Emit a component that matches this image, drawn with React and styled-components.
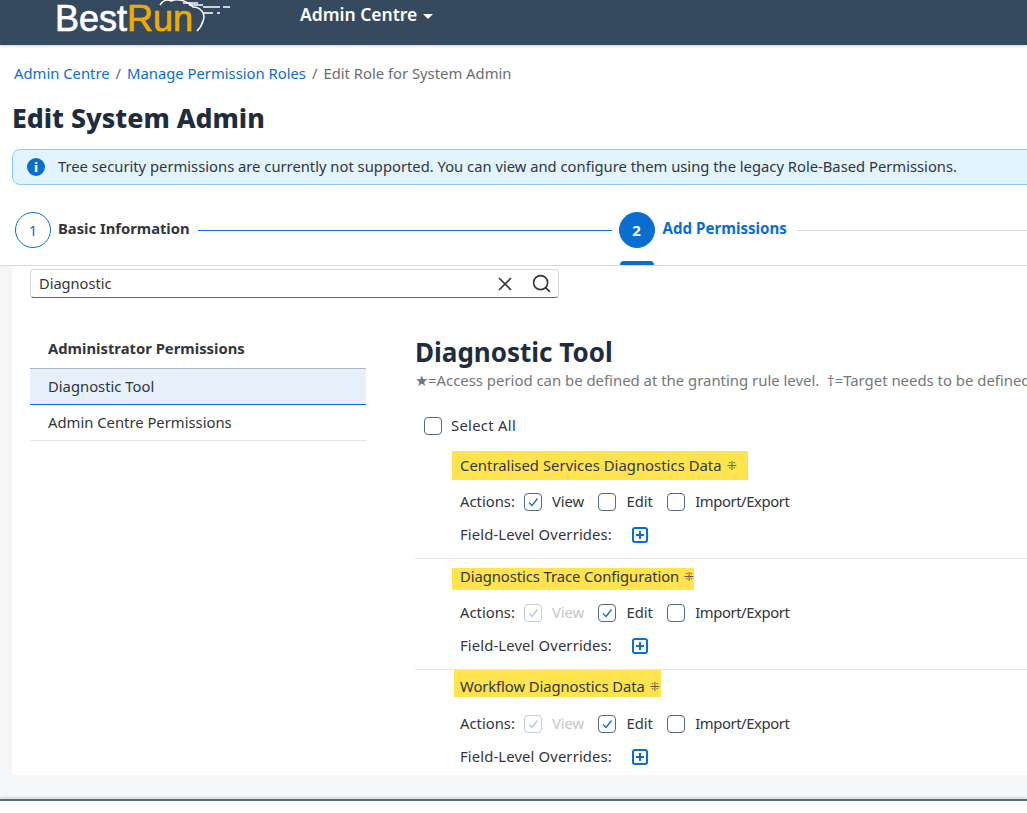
import React from "react";
import styled, { createGlobalStyle } from "styled-components";
import { X, Search } from "lucide-react";

const GlobalStyle = createGlobalStyle`
  html, body {
    margin: 0;
    padding: 0;
    background: #fff;
    overflow: hidden;
  }
  body {
    font-family: "Noto Sans", "Open Sans", sans-serif;
    color: #32363a;
  }
`;

const Page = styled.div`
  width: 1027px;
  height: 813px;
  overflow: hidden;
  display: flex;
  flex-direction: column;
`;

const TopBar = styled.header`
  height: 45px;
  flex: none;
  background: #354a5f;
  display: flex;
  align-items: flex-start;
  padding-left: 55px;
  box-shadow: 0 1px 3px rgba(0, 0, 0, 0.2);
  overflow: hidden;
`;

const Logo = styled.div`
  position: relative;
  width: 180px;
  height: 32px;
  font-family: "Liberation Sans", Arial, sans-serif;
  font-size: 36px;
  line-height: 37px;
  color: #fff;
  -webkit-text-stroke: 0.7px currentColor;

  span {
    color: #f0ab00;
  }

  svg {
    position: absolute;
    left: 104px;
    top: 0;
    -webkit-text-stroke: 0;
  }
`;

const MenuButton = styled.div`
  margin-left: 65px;
  font-size: 17.5px;
  font-weight: 600;
  color: #fff;
  line-height: 28px;
  display: flex;
  align-items: center;
  gap: 6px;

  i {
    width: 0;
    height: 0;
    border-left: 5px solid transparent;
    border-right: 5px solid transparent;
    border-top: 5px solid #fff;
    margin-top: 4px;
  }
`;

const Crumbs = styled.nav`
  margin: 18px 0 0 14px;
  font-size: 14.8px;
  line-height: 20px;
  color: #6a6d70;
  display: flex;
  gap: 6px;

  a {
    color: #0a6ed1;
  }
`;

const Title = styled.h1`
  margin: 18px 0 0 12px;
  font-size: 26.7px;
  line-height: 34px;
  font-weight: 800;
  color: #1d2d3e;
`;

const Strip = styled.div`
  margin: 14px -300px 0 12px;
  height: 36px;
  box-sizing: border-box;
  flex: none;
  background: #e1f4ff;
  border: 1px solid #8ccbff;
  border-radius: 8px;
  display: flex;
  align-items: center;
  padding-left: 14px;
  gap: 13px;
  font-size: 14.77px;
  color: #32363a;
  white-space: nowrap;
`;

const StripText = styled.span`
  padding-bottom: 2px;
`;

const InfoDot = styled.span`
  width: 18px;
  height: 18px;
  border-radius: 50%;
  background: #0a6ed1;
  color: #fff;
  display: flex;
  align-items: center;
  justify-content: center;
  font-weight: 800;
  font-size: 13px;
`;

const Stepper = styled.div`
  margin-top: 27px;
  height: 54px;
  flex: none;
  padding-left: 15px;
  display: flex;
  align-items: flex-start;
  box-sizing: border-box;
  border-bottom: 1px solid #d9d9d9;
`;

const StepCircle = styled.span`
  flex: none;
  width: 36px;
  height: 36px;
  box-sizing: border-box;
  border-radius: 50%;
  display: flex;
  align-items: center;
  justify-content: center;
  font-size: 15px;
  border: 1px solid #0a6ed1;
  background: ${(p) => (p.$active ? "#0a6ed1" : "#fff")};
  color: ${(p) => (p.$active ? "#fff" : "#0a6ed1")};
  font-weight: ${(p) => (p.$active ? 700 : 400)};
`;

const StepWrap = styled.div`
  position: relative;
  height: 53px;
  flex: none;
  display: flex;
  align-items: flex-start;

  &::after {
    content: "";
    display: ${(p) => (p.$active ? "block" : "none")};
    position: absolute;
    left: 1px;
    bottom: 0;
    width: 34px;
    height: 4px;
    border-radius: 4px 4px 0 0;
    background: #0a6ed1;
  }
`;

const StepLabel = styled.span`
  font-size: ${(p) => (p.$active ? "15.1px" : "14.75px")};
  font-weight: 700;
  line-height: 32px;
  margin-left: ${(p) => (p.$active ? "8px" : "7px")};
  white-space: nowrap;
  color: ${(p) => (p.$active ? "#0a6ed1" : "#32363a")};
`;

const StepLine = styled.span`
  height: 1px;
  margin-top: 18px;
  margin-left: ${(p) => (p.$done ? "8px" : "9px")};
  flex: ${(p) => (p.$done ? "0 0 414px" : "1")};
  margin-right: ${(p) => (p.$done ? "7px" : "0")};
  background: ${(p) => (p.$done ? "#0a6ed1" : "#d9d9d9")};
`;

const Body = styled.div`
  height: 533px;
  flex: none;
  background: #f5f6f7;
  padding-left: 12px;
  box-sizing: border-box;
`;

const Card = styled.div`
  background: #fff;
  height: 509px;
  padding: 3px 0 0 18px;
  box-sizing: border-box;
`;

const SearchBox = styled.div`
  width: 529px;
  height: 29px;
  box-sizing: border-box;
  background: #fff;
  border: 1px solid #d5dadd;
  border-bottom: 1px solid #556b82;
  border-radius: 4px;
  padding: 0 6px 0 8px;
  display: flex;
  align-items: center;
  font-size: 14.6px;
  gap: 15px;
  color: #32363a;

  span {
    flex: 1;
    padding-bottom: 2px;
  }

  svg {
    color: #32363a;
    flex: none;
  }
`;

const Columns = styled.div`
  display: grid;
  grid-template-columns: 336px 1fr;
  column-gap: 49px;
`;

const SideNav = styled.div`
  padding-top: 34px;
`;

const NavTitle = styled.div`
  font-size: 14.8px;
  font-weight: 700;
  height: 36px;
  line-height: 32px;
  padding-left: 18px;
  color: #32363a;
`;

const NavItem = styled.div`
  height: ${(p) => (p.$selected ? "37px" : "36px")};
  box-sizing: border-box;
  padding-left: 18px;
  font-size: 14.8px;
  line-height: 35px;
  color: #32363a;
  background: ${(p) => (p.$selected ? "#e5f0fa" : "#fff")};
  border-top: ${(p) => (p.$selected ? "1px solid #a9b4be" : "none")};
  border-bottom: 1px solid ${(p) => (p.$selected ? "#0a6ed1" : "#e4e4e4")};
`;

const Main = styled.div`
  padding-top: 36px;
  white-space: nowrap;
`;

const SectionTitle = styled.h2`
  margin: 0;
  font-size: 26px;
  line-height: 36px;
  font-weight: 700;
  color: #1d2d3e;
`;

const Legend = styled.div`
  font-size: 14.9px;
  line-height: 20px;
  color: #74777a;
`;

const SelectAll = styled.label`
  display: flex;
  align-items: center;
  gap: 9px;
  font-size: 14.8px;
  height: 22px;
  margin: 25px 0 14px 9px;
`;

const LabelText = styled.span`
  padding-bottom: 2px;
  letter-spacing: ${(p) => p.$spacing || 0}px;
`;

const Box = styled.span`
  width: 18px;
  height: 18px;
  flex: none;
  box-sizing: border-box;
  border-radius: 4px;
  background: #fff;
  border: 1px solid ${(p) => (p.$disabled ? "#c3ccd5" : "#556b82")};
  display: inline-flex;
  align-items: center;
  justify-content: center;
`;

const Group = styled.div`
  border-bottom: ${(p) => (p.$last ? "none" : "1px solid #e4e4e4")};
  height: ${(p) => p.$height}px;
  box-sizing: border-box;
`;

const MarkRow = styled.div`
  display: flex;
  padding-left: ${(p) => p.$indent}px;
  padding-top: ${(p) => p.$top}px;
`;

const Marked = styled.div`
  display: flex;
  align-items: center;
  box-sizing: border-box;
  background: #ffe44f;
  height: ${(p) => p.$height}px;
  width: ${(p) => p.$width}px;
  padding: ${(p) => p.$shift}px 0 ${(p) => p.$lift}px ${(p) => p.$start}px;
  font-size: 14.8px;
  color: #32363a;
  gap: 5px;
`;

const Dagger = styled.span`
  font-size: 12px;
  line-height: 1;
  color: #5a5c45;
  font-family: "DejaVu Sans", sans-serif;
`;

const Row = styled.div`
  display: flex;
  align-items: center;
  font-size: 14.8px;
  height: 22px;
  padding-left: 45px;
  margin-top: ${(p) => p.$top}px;
`;

const RowLabel = styled.span`
  padding-bottom: 2px;
  margin-right: ${(p) => p.$gap}px;
  letter-spacing: ${(p) => p.$spacing || 0}px;
`;

const Option = styled.label`
  display: inline-flex;
  align-items: center;
  gap: 10px;
  margin-right: 14.2px;
  color: ${(p) => (p.$disabled ? "#c3c7cb" : "#32363a")};
`;

const PlusButton = styled.span`
  width: 16px;
  height: 16px;
  box-sizing: border-box;
  border: 2px solid #0a6ed1;
  border-radius: 3px;
  position: relative;

  &::before,
  &::after {
    content: "";
    position: absolute;
    background: #0a6ed1;
  }
  &::before {
    left: 2px;
    right: 2px;
    top: 5px;
    height: 2px;
  }
  &::after {
    top: 2px;
    bottom: 2px;
    left: 5px;
    width: 2px;
  }
`;

const Footer = styled.div`
  flex: 1;
  background: #fff;
  border-top: 2px solid #556b82;
  box-shadow: 0 -1px 3px rgba(0, 0, 0, 0.18);
`;

const Tick = ({ disabled }) => (
  <svg width="12" height="12" viewBox="0 0 12 12" fill="none">
    <path
      d="M2 6.5 L5 9.5 L10.5 2.5"
      stroke={disabled ? "#a9c9ec" : "#0a6ed1"}
      strokeWidth="1.3"
    />
  </svg>
);

const Check = ({ checked, disabled, label, spacing }) => (
  <Option $disabled={disabled}>
    <Box $disabled={disabled}>{checked && <Tick disabled={disabled} />}</Box>
    <LabelText $spacing={spacing}>{label}</LabelText>
  </Option>
);

const groups = [
  {
    name: "Centralised Services Diagnostics Data",
    indent: 37,
    start: 8,
    width: 296,
    markTop: 0,
    mark: 29,
    shift: 1,
    lift: 0,
    height: 108,
    actionsTop: 11,
    view: "on",
    edit: false,
  },
  {
    name: "Diagnostics Trace Configuration",
    indent: 37,
    start: 8,
    width: 242,
    markTop: 9,
    mark: 22,
    shift: 0,
    lift: 4,
    spacing: -0.07,
    height: 111,
    actionsTop: 12,
    view: "locked",
    edit: true,
  },
  {
    name: "Workflow Diagnostics Data",
    indent: 39,
    start: 6,
    width: 207,
    markTop: 0,
    mark: 27,
    shift: 7,
    lift: 0,
    spacing: -0.08,
    height: 105,
    actionsTop: 16,
    view: "locked",
    edit: true,
    last: true,
  },
];

export default function App() {
  return (
    <Page>
      <GlobalStyle />
      <TopBar>
        <Logo>
          Best<span>Run</span>
          <svg width="76" height="34" viewBox="0 0 76 34" fill="none" stroke="#fff">
            <path
              d="M1 5 C 4 0 9 -1 12 1 C 18 -2 27 0 34 7 C 42 7 47 14 44 21 C 43 25 41 28 38 31"
              strokeWidth="1.5"
            />
            <path
              d="M24 3 H39 M30 5 H44 M44 7 H61 M64 7 H71 M44 13 H54 M58 13 H61"
              strokeWidth="1.7"
            />
          </svg>
        </Logo>
        <MenuButton>
          Admin Centre <i />
        </MenuButton>
      </TopBar>

      <Crumbs>
        <a>Admin Centre</a>
        <span>/</span>
        <a>Manage Permission Roles</a>
        <span>/</span>
        <span>Edit Role for System Admin</span>
      </Crumbs>

      <Title>Edit System Admin</Title>

      <Strip>
        <InfoDot>i</InfoDot>
        <StripText>
          Tree security permissions are currently not supported. You can view and configure them
          using the legacy Role-Based Permissions.
        </StripText>
      </Strip>

      <Stepper>
        <StepWrap>
          <StepCircle>1</StepCircle>
          <StepLabel>Basic Information</StepLabel>
        </StepWrap>
        <StepLine $done />
        <StepWrap $active>
          <StepCircle $active>2</StepCircle>
          <StepLabel $active>Add Permissions</StepLabel>
        </StepWrap>
        <StepLine />
      </Stepper>

      <Body>
        <Card>
          <SearchBox>
            <span>Diagnostic</span>
            <X size={22} strokeWidth={1.8} />
            <Search size={21} strokeWidth={1.8} />
          </SearchBox>
          <Columns>
            <SideNav>
              <NavTitle>Administrator Permissions</NavTitle>
              <NavItem $selected>Diagnostic Tool</NavItem>
              <NavItem>Admin Centre Permissions</NavItem>
            </SideNav>
            <Main>
              <SectionTitle>Diagnostic Tool</SectionTitle>
              <Legend>
                ★=Access period can be defined at the granting rule level. &nbsp;†=Target needs to be
                defined
              </Legend>
              <SelectAll>
                <Box />
                <LabelText $spacing={0.3}>Select All</LabelText>
              </SelectAll>
              {groups.map((g) => (
                <Group key={g.name} $height={g.height} $last={g.last}>
                  <MarkRow $indent={g.indent} $top={g.markTop}>
                    <Marked
                      $height={g.mark}
                      $width={g.width}
                      $start={g.start}
                      $shift={g.shift}
                      $lift={g.lift}
                    >
                      <LabelText $spacing={g.spacing || 0.05}>{g.name}</LabelText>
                      <Dagger>⁜</Dagger>
                    </Marked>
                  </MarkRow>
                  <Row $top={g.actionsTop}>
                    <RowLabel $gap={9}>Actions:</RowLabel>
                    <Check label="View" checked disabled={g.view === "locked"} />
                    <Check label="Edit" checked={g.edit} />
                    <Check label="Import/Export" spacing={-0.4} />
                  </Row>
                  <Row $top={11}>
                    <RowLabel $gap={20} $spacing={0.14}>
                      Field-Level Overrides:
                    </RowLabel>
                    <PlusButton />
                  </Row>
                </Group>
              ))}
            </Main>
          </Columns>
        </Card>
      </Body>
      <Footer />
    </Page>
  );
}
